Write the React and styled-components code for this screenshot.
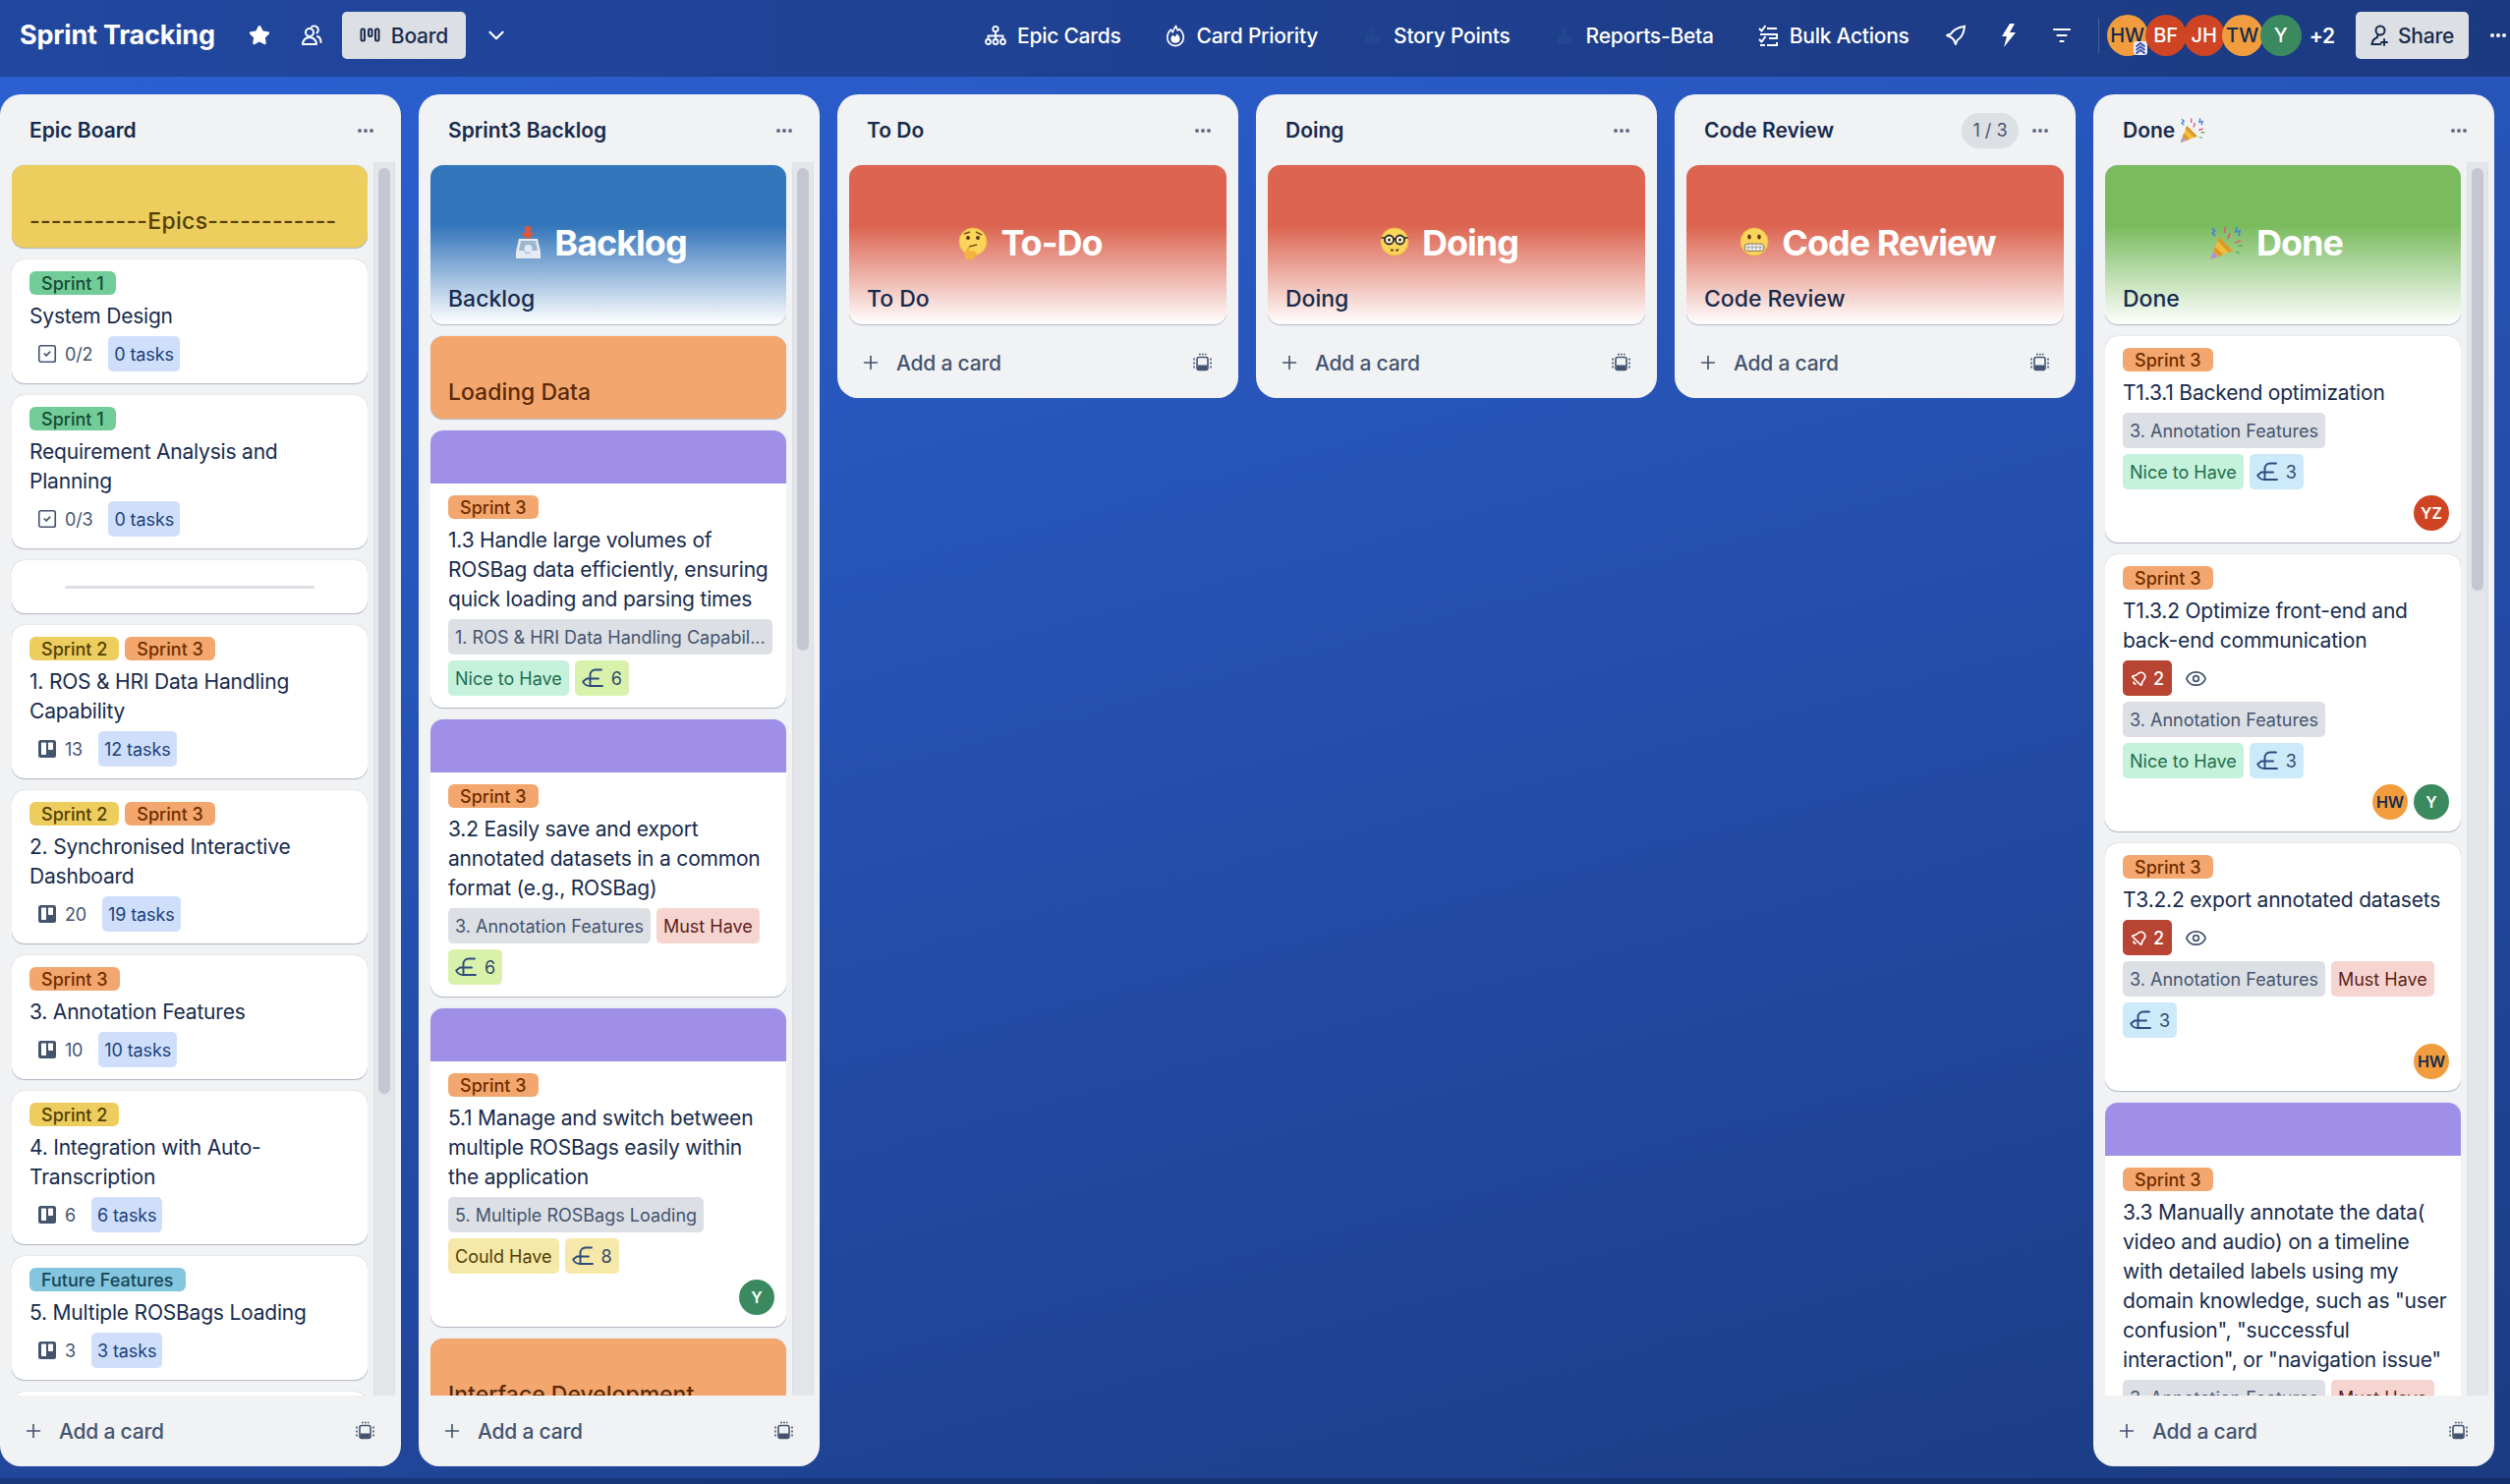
import React from "react";
import styled, { createGlobalStyle } from "styled-components";
import { Bell, ChevronDown, Eye, Plus, SquareCheck, Star } from "lucide-react";

const GlobalStyle = createGlobalStyle`
  html, body {
    margin: 0;
    height: 100%;
    overflow: hidden;
    font-family: Inter, "Noto Sans", sans-serif;
    color: #172b4d;
  }
  * { box-sizing: border-box; }
`;

const Page = styled.div`
  width: 2554px;
  height: 1510px;
  display: grid;
  grid-template-rows: 78px 1fr 6px;
  overflow: hidden;
  background: linear-gradient(165deg, #2c61d4 0%, #2652b4 42%, #1b3b82 100%);
`;

const TopBar = styled.header`
  display: flex;
  align-items: center;
  padding-bottom: 6px;
  background: linear-gradient(90deg, #21479f 0%, #1c3a82 100%);
  color: #fff;
  overflow: hidden;
`;

const LeftGroup = styled.div`
  width: 1001px;
  flex: none;
  display: flex;
  align-items: center;
  padding-left: 20px;
`;

const BoardName = styled.h1`
  margin: 0 33px 0 0;
  font-size: 27px;
  line-height: 36px;
  font-weight: 700;
  letter-spacing: -0.2px;
  white-space: nowrap;
`;

const BarIcon = styled.span`
  display: flex;
  width: 24px;
  height: 24px;
  flex: none;
  align-items: center;
  justify-content: center;
  margin-right: ${(p) => p.$gap || 0}px;
  color: ${(p) => p.$color || "#fff"};
`;

const LightButton = styled.div`
  height: 48px;
  flex: none;
  display: flex;
  align-items: center;
  gap: ${(p) => p.$gap}px;
  padding: 0 ${(p) => p.$pad}px;
  border-radius: 5px;
  background: #dcdfe4;
  color: #172b4d;
  font-size: 21px;
  font-weight: 500;
  letter-spacing: -0.2px;
`;

const ViewChevron = styled.span`
  display: flex;
  margin-left: 18px;
`;

const Nav = styled.nav`
  display: flex;
  align-items: center;
  gap: 43px;
`;

const NavItem = styled.div`
  display: flex;
  align-items: center;
  gap: 10px;
  font-size: 21px;
  font-weight: 500;
  letter-spacing: -0.25px;
  white-space: nowrap;
`;

const Tools = styled.div`
  display: flex;
  align-items: center;
  gap: 30px;
  margin-left: 35px;
`;

const Divider = styled.span`
  width: 1px;
  height: 36px;
  flex: none;
  margin: 0 8px 0 25px;
  background: rgba(255, 255, 255, 0.2);
`;

const Avatar = styled.span`
  position: relative;
  width: ${(p) => p.$size}px;
  height: ${(p) => p.$size}px;
  flex: none;
  display: flex;
  align-items: center;
  justify-content: center;
  border-radius: 50%;
  font-size: ${(p) => (p.$size > 40 ? 20 : 16)}px;
  font-weight: ${(p) => (p.$size > 40 ? 500 : 600)};
  background: ${(p) => p.$bg};
  color: ${(p) => p.$fg};
`;

const AvatarStack = styled.div`
  display: flex;
  ${Avatar} + ${Avatar} { margin-left: -3px; }
`;

const AdminMark = styled.span`
  position: absolute;
  right: 1px;
  bottom: 1px;
  width: 14px;
  height: 14px;
  display: flex;
  border-radius: 3px;
  background: #e9ecf6;
`;

const MoreMembers = styled.span`
  margin: 0 21px 0 8px;
  font-size: 21px;
  font-weight: 600;
  letter-spacing: -0.2px;
`;

const ShareDots = styled.span`
  display: flex;
  margin-left: 18px;
`;

const Board = styled.main`
  display: flex;
  align-items: flex-start;
  gap: 18px;
  padding-top: 18px;
  min-height: 0;
`;

const BottomStrip = styled.div`
  background: rgba(10, 26, 66, 0.35);
`;

const List = styled.section`
  width: 408px;
  max-height: 1396px;
  flex: none;
  display: flex;
  flex-direction: column;
  border-radius: 21px;
  background: #f1f2f4;
`;

const ListHeader = styled.div`
  height: 69px;
  flex: none;
  display: flex;
  align-items: center;
  padding: 4px 27px 0 30px;
`;

const ListTitle = styled.h2`
  display: flex;
  align-items: center;
  gap: 4px;
  margin: 0;
  flex: 1;
  font-size: 21px;
  line-height: 30px;
  font-weight: 600;
  color: #172b4d;
`;

const CountPill = styled.span`
  width: 58px;
  height: 36px;
  margin-right: 13px;
  display: flex;
  align-items: center;
  justify-content: center;
  border-radius: 18px;
  background: #dcdfe4;
  color: #44546f;
  font-size: 18px;
`;

const ListBody = styled.div`
  flex: 1;
  min-height: 0;
  display: flex;
  overflow: hidden;
  ${(p) => p.$tall && "height: 1255px;"}
`;

const CardColumn = styled.div`
  width: ${(p) => (p.$tall ? 362 : 384)}px;
  flex: none;
  margin-left: 12px;
  padding-top: 3px;
  padding-bottom: 3px;
  display: flex;
  flex-direction: column;
  gap: 12px;
  overflow: hidden;
`;

const ScrollTrack = styled.div`
  width: 22px;
  flex: none;
  margin-left: 6px;
  padding-top: 6px;
  display: flex;
  justify-content: center;
  background: #e3e5ea;
  border-left: 1px solid #dcdfe4;
  border-right: 1px solid #dcdfe4;
`;

const ScrollThumb = styled.div`
  width: 12px;
  height: ${(p) => p.$length}px;
  border-radius: 6px;
  background: #c3c7d0;
`;

const ListFooter = styled.div`
  height: 72px;
  flex: none;
  display: flex;
  align-items: center;
  padding: 0 27px 0 23px;
  color: #44546f;
`;

const AddCard = styled.div`
  flex: 1;
  display: flex;
  align-items: center;
  gap: 15px;
  font-size: 21px;
  font-weight: 500;
  letter-spacing: -0.2px;
`;

const Card = styled.article`
  flex: none;
  overflow: hidden;
  border-radius: 13px;
  background: #fff;
  box-shadow: 0 1px 1px rgba(9, 30, 66, 0.25), 0 0 1px rgba(9, 30, 66, 0.31);
`;

const HeroCard = styled(Card)`
  height: 162px;
  padding: 53px 18px 0;
  background: linear-gradient(180deg, ${(p) => p.$color} 38%, #fff 100%);
`;

const HeroBanner = styled.div`
  height: 52px;
  display: flex;
  align-items: center;
  justify-content: center;
  gap: 13px;
  padding-right: 15px;
  color: #fff;
  font-size: 36px;
  font-weight: 700;
  letter-spacing: -1px;
`;

const HeroName = styled.div`
  margin-top: 16px;
  font-size: 23px;
  line-height: 30px;
  font-weight: 500;
`;

const ColorCard = styled(Card)`
  height: 84px;
  display: flex;
  align-items: flex-end;
  padding: 0 18px 12px;
  background: ${(p) => p.$color};
  color: ${(p) => p.$ink};
  font-size: 23px;
  line-height: 30px;
  font-weight: 500;
  letter-spacing: ${(p) => p.$track || 0}px;
  white-space: nowrap;
`;

const SeparatorCard = styled(Card)`
  height: 54px;
  display: flex;
  align-items: center;
  padding: 0 54px;
`;

const SeparatorLine = styled.hr`
  width: 100%;
  height: 3px;
  margin: 0;
  border: 0;
  border-radius: 2px;
  background: #dcdfe4;
`;

const CoverBand = styled.div`
  height: 54px;
  background: #9f8fe8;
`;

const CardBody = styled.div`
  display: flex;
  flex-direction: column;
  gap: 6px;
  padding: 12px 12px 12px 18px;
`;

const LabelRow = styled.div`
  display: flex;
  gap: 6px;
`;

const Label = styled.span`
  height: 24px;
  display: flex;
  align-items: center;
  padding: 0 12px;
  border-radius: 6px;
  font-size: 18px;
  font-weight: 500;
  background: ${(p) => p.$bg};
  color: ${(p) => p.$fg};
`;

const CardTitle = styled.div`
  padding-top: 1px;
  margin-bottom: -1px;
  font-size: 21px;
  line-height: 30px;
  letter-spacing: -0.2px;
  color: #172b4d;
`;

const MetaRow = styled.div`
  height: 36px;
  display: flex;
  align-items: center;
  padding-left: 9px;
  color: #44546f;
  font-size: 18px;
`;

const ChecklistMark = styled(SquareCheck)`
  margin: 0 -2px;
`;

const MetaCount = styled.span`
  margin: 0 16px 0 9px;
  letter-spacing: -0.2px;
`;

const TaskPill = styled.span`
  height: 36px;
  display: flex;
  align-items: center;
  padding: 0 6px;
  border-radius: 5px;
  background: #cfdffb;
  color: #1c3f7a;
  letter-spacing: -0.1px;
`;

const ChipRow = styled.div`
  display: flex;
  flex-wrap: wrap;
  gap: 6px;
`;

const Chip = styled.span`
  height: 36px;
  display: flex;
  align-items: center;
  gap: 8px;
  padding: 0 7px;
  border-radius: 5px;
  font-size: 18px;
  white-space: nowrap;
  background: ${(p) => p.$bg};
  color: ${(p) => p.$fg};
`;

const AlertRow = styled.div`
  height: 36px;
  display: flex;
  align-items: center;
  gap: 13px;
`;

const AlertBadge = styled.span`
  width: 50px;
  height: 36px;
  display: flex;
  align-items: center;
  justify-content: center;
  gap: 6px;
  border-radius: 5px;
  background: #b84433;
  color: #fff;
  font-size: 18px;
  font-weight: 500;
  svg { transform: rotate(45deg); }
`;

const MemberRow = styled.div`
  display: flex;
  justify-content: flex-end;
  gap: 6px;
`;

const sprintTones = {
  "Sprint 1": ["#71cc98", "#164b35"],
  "Sprint 2": ["#edcd5e", "#533f04"],
  "Sprint 3": ["#f3a76e", "#702e00"],
  "Future Features": ["#84c5e0", "#164555"],
};

const chipTones = {
  gray: ["#dcdfe4", "#44546f"],
  nice: ["#c6f1dc", "#216e4e"],
  must: ["#f6d5d0", "#5d1f1a"],
  could: ["#f5e8a8", "#533f04"],
  lime: ["#d9f2ab", "#33496b"],
  sky: ["#cceafa", "#33496b"],
  sand: ["#f5e8a8", "#33496b"],
};

const people = {
  HW: ["#f29d3d", "#172b4d"],
  BF: ["#cf4523", "#fff"],
  JH: ["#cf4523", "#fff"],
  TW: ["#f29d3d", "#172b4d"],
  Y: ["#3b8a5f", "#fff"],
  YZ: ["#cf4523", "#fff"],
};

const TeamIcon = () => (
  <svg width="24" height="24" viewBox="0 0 24 24" fill="none" stroke="currentColor" strokeWidth="2">
    <circle cx="10" cy="9" r="4" />
    <path d="M3 21c0-4 3-7 7-7s7 3 7 7z" strokeLinejoin="round" />
    <path d="M12 3.500a4 4 0 0 1 5.500 6M18 13c2.500 1 3.500 3.500 3.500 6" strokeLinecap="round" />
  </svg>
);

const BoardIcon = () => (
  <svg width="21" height="16" viewBox="0 0 21 16" fill="none" stroke="currentColor" strokeWidth="2">
    <rect x="1.500" y="1.500" width="3.500" height="12" rx="1.500" />
    <rect x="9" y="1.500" width="3.500" height="7.500" rx="1.500" />
    <rect x="16" y="1.500" width="3.500" height="12" rx="1.500" />
  </svg>
);

const HierarchyIcon = () => (
  <svg width="22" height="22" viewBox="0 0 22 22" fill="none" stroke="currentColor" strokeWidth="1.800">
    <circle cx="11" cy="4.500" r="2.700" />
    <circle cx="3.500" cy="17.500" r="2.500" />
    <circle cx="11" cy="17.500" r="2.500" />
    <circle cx="18.500" cy="17.500" r="2.500" />
    <path d="M11 7.500V15M3.500 15v-3.500h15V15" />
  </svg>
);

const FlameIcon = () => (
  <svg width="22" height="25" viewBox="0 0 24 26" fill="none">
    <path d="M12 24c-5 0-9-4-9-9 0-4 2-7 4-9l2 3c1-3 2-5 3.500-7l2 5 2-1.500c2.500 2 4.500 5.500 4.500 9.500 0 5-4 9-9 9z" stroke="currentColor" strokeWidth="1.800" strokeLinejoin="round" />
    <path d="M12 21c-3 0-5-2-5-4.500 0-2 1-3.500 2.500-4.500.5 1.500 1.500 2 2.500 1.500 1-.8 1-2 1-3 2.500 1 4 3.500 4 6 0 2.500-2 4.500-5 4.500z" fill="currentColor" />
  </svg>
);

const ChecklistIcon = () => (
  <svg width="20" height="24" viewBox="0 0 20 24" fill="none" stroke="currentColor" strokeWidth="2">
    <path d="M1 5l2.500 2.500L7.500 2M1 16l2.500 2.500L7.500 13" />
    <path d="M9 5h10M2 11h17v4H11M9 22h10v-3M2 22h5" />
  </svg>
);

const RocketIcon = () => (
  <svg width="24" height="24" viewBox="0 0 24 24" fill="none" stroke="currentColor" strokeWidth="2" strokeLinejoin="round">
    <path d="M21 3c-6 .5-11 3-14 7.500L3 12l4.500 2 2.500 2.500 2 4.500 1.500-4c5-3 7-8.500 7.500-14.500z" />
  </svg>
);

const BoltIcon = () => (
  <svg width="20" height="26" viewBox="0 0 20 26" fill="currentColor">
    <path d="M11 1L3 14h5L5 25l12-15h-6l5-9z" />
  </svg>
);

const FilterIcon = () => (
  <svg width="20" height="18" viewBox="0 0 20 18" fill="none" stroke="currentColor" strokeWidth="2.200" strokeLinecap="round">
    <path d="M2 3h16M5.500 9h9M8.500 15h3" />
  </svg>
);

const ShareIcon = () => (
  <svg width="20" height="22" viewBox="0 0 20 22" fill="none" stroke="currentColor" strokeWidth="2" strokeLinecap="round">
    <circle cx="10" cy="6" r="4.500" />
    <path d="M7.500 10.500L7 13c-3 1-5 3-5.500 7h9M14 15v6M11 18h6" />
  </svg>
);

const ChevronsIcon = () => (
  <svg width="14" height="14" viewBox="0 0 14 14" fill="none" stroke="#3f4fb3" strokeWidth="1.800">
    <path d="M2.500 5.500L7 2l4.500 3.500M2.500 9L7 5.500 11.500 9M2.500 12.500L7 9l4.500 3.500" />
  </svg>
);

const Dots = ({ size = 18, color = "#626f86" }) => (
  <svg width={size} height="6" viewBox="0 0 18 6" fill={color}>
    <circle cx="3" cy="3" r="2" />
    <circle cx="9" cy="3" r="2" />
    <circle cx="15" cy="3" r="2" />
  </svg>
);

const TemplateIcon = () => (
  <svg width="19" height="20" viewBox="0 0 19 20" fill="none">
    <rect x="4" y="4.500" width="11" height="13" rx="2" stroke="currentColor" strokeWidth="1.600" />
    <path d="M4.500 12.500h10V16a1.200 1.200 0 0 1-1.200 1.200H5.700A1.200 1.200 0 0 1 4.500 16z" fill="currentColor" />
    <path d="M6 1.500h1.800M9 1.500h1.800M12 1.500h1.500M1 5.500v2M1 9.500v2M1 13.500v2M18 5.500v2M18 9.500v2M18 13.500v2" stroke="currentColor" strokeWidth="1.600" />
  </svg>
);

const TrelloIcon = () => (
  <svg width="18" height="18" viewBox="0 0 18 18">
    <rect width="18" height="18" rx="2.500" fill="#44546f" />
    <rect x="3" y="2.500" width="5" height="12.500" rx=".8" fill="#fff" />
    <rect x="10" y="2.500" width="5" height="7.500" rx=".8" fill="#fff" />
  </svg>
);

const EpicIcon = () => (
  <svg width="22" height="20" viewBox="0 0 22 20" fill="none" stroke="#2c4a7c" strokeWidth="1.900" strokeLinecap="round" strokeLinejoin="round">
    <path d="M20 1.500h-6c-3.500 0-5.500 2.500-5.500 5.500v11H21" />
    <path d="M17 10.500H5L1.200 13.500c1 2.500 3.800 4.500 7.300 4.500" />
  </svg>
);

const Face = ({ children }) => (
  <svg width="30" height="36" viewBox="0 0 30 36">
    <circle cx="15" cy="17" r="14" fill="#fbd55b" stroke="#f0b53f" strokeWidth="1" />
    {children}
  </svg>
);

const ThinkingEmoji = () => (
  <Face>
    <circle cx="10" cy="13" r="2" fill="#5b3a12" />
    <circle cx="20" cy="13" r="2" fill="#5b3a12" />
    <path d="M6 9l6-2M18 7l6 3M11 22l8-2" stroke="#7a4f16" strokeWidth="1.500" fill="none" />
    <path d="M8 35c-2-3-2-7 0-9l2-4 2 1-1 3 7 1c1 2 0 3-1 3 0 2-1 5-4 5z" fill="#f4b43c" />
  </Face>
);

const NerdEmoji = () => (
  <Face>
    <circle cx="9.500" cy="15" r="4.500" fill="#fff4cc" stroke="#2b2b2b" strokeWidth="1.800" />
    <circle cx="20.500" cy="15" r="4.500" fill="#fff4cc" stroke="#2b2b2b" strokeWidth="1.800" />
    <circle cx="9.500" cy="15" r="1.500" fill="#2b2b2b" />
    <circle cx="20.500" cy="15" r="1.500" fill="#2b2b2b" />
    <path d="M14 14h2M1.500 13H5M25 13h3.500" stroke="#2b2b2b" strokeWidth="1.500" />
    <path d="M9 23c3 2.500 9 2.500 12 0l-2 1.500v2h-3v-1.500h-2v1.500h-3v-2z" fill="#6b3e12" />
  </Face>
);

const GrimaceEmoji = () => (
  <Face>
    <ellipse cx="10" cy="12" rx="1.800" ry="2.500" fill="#5b3a12" />
    <ellipse cx="20" cy="12" rx="1.800" ry="2.500" fill="#5b3a12" />
    <rect x="5" y="19" width="20" height="7.500" rx="3.500" fill="#f0f0f0" stroke="#8b7a55" strokeWidth="1" />
    <path d="M5 22.700h20M9 19v7.500M13 19v7.500M17 19v7.500M21 19v7.500" stroke="#9a9a9a" strokeWidth=".8" />
  </Face>
);

const InboxEmoji = () => (
  <svg width="27" height="36" viewBox="0 0 27 36">
    <path d="M10 1h6v7h4l-7 7-7-7h4z" fill="#d9583c" />
    <path d="M4 14h19l3 13v7H1v-7z" fill="#e6ebf2" />
    <path d="M6 16h15l2 10h-6l-2 3h-4l-2-3H4z" fill="#9fb6cf" />
    <circle cx="13.500" cy="24" r="4" fill="#dfeafa" />
  </svg>
);

const PartyEmoji = ({ size = 36 }) => (
  <svg width={size} height={size} viewBox="0 0 36 36">
    <path d="M2 35l9-23 14 14z" fill="#f2bd3f" />
    <path d="M7 22l8 8-4 2-6-6zM11 12l14 14-4 2L9 16z" fill="#d99a2c" />
    <path d="M2 35l3-8 5 5z" fill="#b58fd9" />
    <path d="M4 3l3 3-3 2 3 3M29 2l-1 5 4-1-1 5" stroke="#4d86d6" strokeWidth="1.800" fill="none" />
    <path d="M17 2v6M22 8l-2 6M33 16l-6 2" stroke="#d85f7b" strokeWidth="1.800" fill="none" />
    <path d="M28 27l4 2M30 21l5 0" stroke="#67b56a" strokeWidth="1.800" fill="none" />
  </svg>
);

const Sprints = ({ names }) => (
  <LabelRow>
    {names.map((name) => (
      <Label key={name} $bg={sprintTones[name][0]} $fg={sprintTones[name][1]}>{name}</Label>
    ))}
  </LabelRow>
);

const Members = ({ names }) => (
  <MemberRow>
    {names.map((name) => (
      <Avatar key={name} $size={36} $bg={people[name][0]} $fg={people[name][1]}>{name}</Avatar>
    ))}
  </MemberRow>
);

const EpicCard = ({ sprints, title, checklist, count, tasks }) => (
  <Card>
    <CardBody>
      <Sprints names={sprints} />
      <CardTitle>{title}</CardTitle>
      <MetaRow>
        {checklist ? <ChecklistMark size={22} strokeWidth={1.800} /> : <TrelloIcon />}
        <MetaCount>{count}</MetaCount>
        <TaskPill>{tasks}</TaskPill>
      </MetaRow>
    </CardBody>
  </Card>
);

const StoryCard = ({ cover, title, alert, chips, points, pointsTone, members }) => (
  <Card>
    {cover && <CoverBand />}
    <CardBody>
      <Sprints names={["Sprint 3"]} />
      <CardTitle>{title}</CardTitle>
      {alert && (
        <AlertRow>
          <AlertBadge><Bell size={17} strokeWidth={2.400} />2</AlertBadge>
          <Eye size={23} color="#44546f" strokeWidth={1.800} />
        </AlertRow>
      )}
      <ChipRow>
        {chips.map(([text, tone]) => (
          <Chip key={text} $bg={chipTones[tone][0]} $fg={chipTones[tone][1]}>{text}</Chip>
        ))}
        <Chip $bg={chipTones[pointsTone][0]} $fg={chipTones[pointsTone][1]}>
          <EpicIcon />
          {points}
        </Chip>
      </ChipRow>
      {members && <Members names={members} />}
    </CardBody>
  </Card>
);

const Hero = ({ color, emoji, banner, name }) => (
  <HeroCard $color={color}>
    <HeroBanner>{emoji}{banner}</HeroBanner>
    <HeroName>{name}</HeroName>
  </HeroCard>
);

const BoardList = ({ title, count, thumb, children }) => (
  <List>
    <ListHeader>
      <ListTitle>{title}</ListTitle>
      {count && <CountPill>{count}</CountPill>}
      <Dots />
    </ListHeader>
    <ListBody $tall={!!thumb}>
      <CardColumn $tall={!!thumb}>{children}</CardColumn>
      {thumb && <ScrollTrack><ScrollThumb $length={thumb} /></ScrollTrack>}
    </ListBody>
    <ListFooter>
      <AddCard><Plus size={22} strokeWidth={1.800} />Add a card</AddCard>
      <TemplateIcon />
    </ListFooter>
  </List>
);

// power-up icons that barely show against the bar
const PowerUpIcon = () => (
  <svg width="24" height="24" viewBox="0 0 24 24" fill="currentColor">
    <path d="M9 3h5v8h6v10H5V11h4z" />
  </svg>
);

const ANNOTATION = ["3. Annotation Features", "gray"];
const NICE = ["Nice to Have", "nice"];
const MUST = ["Must Have", "must"];

export default function App() {
  return (
    <Page>
      <GlobalStyle />
      <TopBar>
        <LeftGroup>
          <BoardName>Sprint Tracking</BoardName>
          <BarIcon $gap={29}><Star size={22} fill="#fff" strokeWidth={2} /></BarIcon>
          <BarIcon $gap={19}><TeamIcon /></BarIcon>
          <LightButton $pad={18} $gap={11}><BoardIcon />Board</LightButton>
          <ViewChevron><ChevronDown size={26} strokeWidth={2} /></ViewChevron>
        </LeftGroup>
        <Nav>
          <NavItem><BarIcon><HierarchyIcon /></BarIcon>Epic Cards</NavItem>
          <NavItem><BarIcon><FlameIcon /></BarIcon>Card Priority</NavItem>
          <NavItem><BarIcon $color="#22468f"><PowerUpIcon /></BarIcon>Story Points</NavItem>
          <NavItem><BarIcon $color="#22468f"><PowerUpIcon /></BarIcon>Reports-Beta</NavItem>
          <NavItem><BarIcon><ChecklistIcon /></BarIcon>Bulk Actions</NavItem>
        </Nav>
        <Tools>
          <BarIcon><RocketIcon /></BarIcon>
          <BarIcon><BoltIcon /></BarIcon>
          <BarIcon><FilterIcon /></BarIcon>
        </Tools>
        <Divider />
        <AvatarStack>
          {["HW", "BF", "JH", "TW", "Y"].map((name) => (
            <Avatar key={name} $size={42} $bg={people[name][0]} $fg={people[name][1]}>
              {name}
              {name === "HW" && <AdminMark><ChevronsIcon /></AdminMark>}
            </Avatar>
          ))}
        </AvatarStack>
        <MoreMembers>+2</MoreMembers>
        <LightButton $pad={15} $gap={8}><ShareIcon />Share</LightButton>
        <ShareDots><Dots size={24} color="#fff" /></ShareDots>
      </TopBar>

      <Board>
        <BoardList title="Epic Board" thumb={942}>
          <ColorCard $color="#edcd5e" $ink="#533f04" $track={0.3}>-----------Epics------------</ColorCard>
          <EpicCard sprints={["Sprint 1"]} title="System Design" checklist count="0/2" tasks="0 tasks" />
          <EpicCard sprints={["Sprint 1"]} title="Requirement Analysis and Planning" checklist count="0/3" tasks="0 tasks" />
          <SeparatorCard><SeparatorLine /></SeparatorCard>
          <EpicCard sprints={["Sprint 2", "Sprint 3"]} title="1. ROS & HRI Data Handling Capability" count="13" tasks="12 tasks" />
          <EpicCard sprints={["Sprint 2", "Sprint 3"]} title="2. Synchronised Interactive Dashboard" count="20" tasks="19 tasks" />
          <EpicCard sprints={["Sprint 3"]} title="3. Annotation Features" count="10" tasks="10 tasks" />
          <EpicCard sprints={["Sprint 2"]} title="4. Integration with Auto-Transcription" count="6" tasks="6 tasks" />
          <EpicCard sprints={["Future Features"]} title="5. Multiple ROSBags Loading" count="3" tasks="3 tasks" />
          <SeparatorCard />
        </BoardList>

        <BoardList title="Sprint3 Backlog" thumb={491}>
          <Hero color="#3476bb" emoji={<InboxEmoji />} banner="Backlog" name="Backlog" />
          <ColorCard $color="#f3a76e" $ink="#5c2a0a">Loading Data</ColorCard>
          <StoryCard
            cover
            title="1.3 Handle large volumes of ROSBag data efficiently, ensuring quick loading and parsing times"
            chips={[["1. ROS & HRI Data Handling Capabil...", "gray"], NICE]}
            points="6"
            pointsTone="lime"
          />
          <StoryCard
            cover
            title="3.2 Easily save and export annotated datasets in a common format (e.g., ROSBag)"
            chips={[ANNOTATION, MUST]}
            points="6"
            pointsTone="lime"
          />
          <StoryCard
            cover
            title="5.1 Manage and switch between multiple ROSBags easily within the application"
            chips={[["5. Multiple ROSBags Loading", "gray"], ["Could Have", "could"]]}
            points="8"
            pointsTone="sand"
            members={["Y"]}
          />
          <ColorCard $color="#f3a76e" $ink="#5c2a0a">Interface Development</ColorCard>
        </BoardList>

        <BoardList title="To Do">
          <Hero color="#dc6450" emoji={<ThinkingEmoji />} banner="To-Do" name="To Do" />
        </BoardList>

        <BoardList title="Doing">
          <Hero color="#dc6450" emoji={<NerdEmoji />} banner="Doing" name="Doing" />
        </BoardList>

        <BoardList title="Code Review" count="1 / 3">
          <Hero color="#dc6450" emoji={<GrimaceEmoji />} banner="Code Review" name="Code Review" />
        </BoardList>

        <BoardList title={<>Done <PartyEmoji size={27} /></>} thumb={430}>
          <Hero color="#7abb5e" emoji={<PartyEmoji />} banner="Done" name="Done" />
          <StoryCard title="T1.3.1 Backend optimization" chips={[ANNOTATION, NICE]} points="3" pointsTone="sky" members={["YZ"]} />
          <StoryCard title="T1.3.2 Optimize front-end and back-end communication" alert chips={[ANNOTATION, NICE]} points="3" pointsTone="sky" members={["HW", "Y"]} />
          <StoryCard title="T3.2.2 export annotated datasets" alert chips={[ANNOTATION, MUST]} points="3" pointsTone="sky" members={["HW"]} />
          <StoryCard
            cover
            title={'3.3 Manually annotate the data( video and audio) on a timeline with detailed labels using my domain knowledge, such as "user confusion", "successful interaction", or "navigation issue"'}
            chips={[ANNOTATION, MUST]}
            points="3"
            pointsTone="sky"
          />
        </BoardList>
      </Board>
      <BottomStrip />
    </Page>
  );
}
